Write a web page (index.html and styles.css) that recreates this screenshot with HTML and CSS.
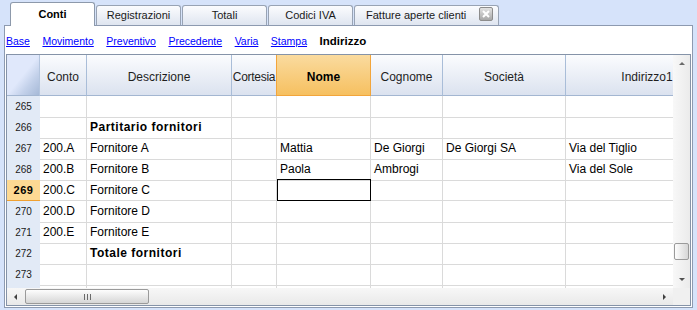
FILE: index.html
```html
<!DOCTYPE html>
<html lang="it">
  <head>
    <meta charset="UTF-8" />
    <title>Conti - Indirizzo</title>
    <link rel="stylesheet" href="styles.css">
  </head>
  <body>
    <!-- schede -->
    <div class="tabs">
      <div class="tab active">Conti</div>
      <div class="tab">Registrazioni</div>
      <div class="tab">Totali</div>
      <div class="tab">Codici IVA</div>
      <div class="tab tab-wide">
        Fatture aperte clienti
        <span class="tab-close">
          <svg width="8" height="8" viewBox="0 0 8 8"><path d="M1 1L7 7M7 1L1 7" stroke="#fff" stroke-width="2" /></svg>
        </span>
      </div>
    </div>

    <div class="panel">
      <!-- viste -->
      <div class="views">
        <a href="#">Base</a>
        <a href="#">Movimento</a>
        <a href="#">Preventivo</a>
        <a href="#">Precedente</a>
        <a href="#">Varia</a>
        <a href="#">Stampa</a>
        <b>Indirizzo</b>
      </div>

      <!-- tabella -->
      <div class="grid">
        <div class="grid-main">
          <div class="sheet">
            <div class="row head">
              <div class="hcorner"></div>
              <div class="hcell">Conto</div>
              <div class="hcell">Descrizione</div>
              <div class="hcell tight">Cortesia</div>
              <div class="hcell sel">Nome</div>
              <div class="hcell">Cognome</div>
              <div class="hcell">Società</div>
              <div class="hcell">Indirizzo1</div>
            </div>
            <div class="row">
              <div class="num">265</div>
              <div class="cell"></div><div class="cell"></div><div class="cell"></div><div class="cell"></div>
              <div class="cell"></div><div class="cell"></div><div class="cell"></div>
            </div>
            <div class="row">
              <div class="num">266</div>
              <div class="cell"></div><div class="cell bold">Partitario fornitori</div><div class="cell"></div><div class="cell"></div>
              <div class="cell"></div><div class="cell"></div><div class="cell"></div>
            </div>
            <div class="row">
              <div class="num">267</div>
              <div class="cell">200.A</div><div class="cell">Fornitore A</div><div class="cell"></div><div class="cell">Mattia</div>
              <div class="cell">De Giorgi</div><div class="cell">De Giorgi SA</div><div class="cell">Via del Tiglio</div>
            </div>
            <div class="row">
              <div class="num">268</div>
              <div class="cell">200.B</div><div class="cell">Fornitore B</div><div class="cell"></div><div class="cell">Paola</div>
              <div class="cell">Ambrogi</div><div class="cell"></div><div class="cell">Via del Sole</div>
            </div>
            <div class="row">
              <div class="num sel">269</div>
              <div class="cell">200.C</div><div class="cell">Fornitore C</div><div class="cell"></div><div class="cell current"></div>
              <div class="cell"></div><div class="cell"></div><div class="cell"></div>
            </div>
            <div class="row">
              <div class="num">270</div>
              <div class="cell">200.D</div><div class="cell">Fornitore D</div><div class="cell"></div><div class="cell"></div>
              <div class="cell"></div><div class="cell"></div><div class="cell"></div>
            </div>
            <div class="row">
              <div class="num">271</div>
              <div class="cell">200.E</div><div class="cell">Fornitore E</div><div class="cell"></div><div class="cell"></div>
              <div class="cell"></div><div class="cell"></div><div class="cell"></div>
            </div>
            <div class="row">
              <div class="num">272</div>
              <div class="cell"></div><div class="cell bold">Totale fornitori</div><div class="cell"></div><div class="cell"></div>
              <div class="cell"></div><div class="cell"></div><div class="cell"></div>
            </div>
            <div class="row">
              <div class="num">273</div>
              <div class="cell"></div><div class="cell"></div><div class="cell"></div><div class="cell"></div>
              <div class="cell"></div><div class="cell"></div><div class="cell"></div>
            </div>
            <div class="row">
              <div class="num"></div>
              <div class="cell"></div><div class="cell"></div><div class="cell"></div><div class="cell"></div>
              <div class="cell"></div><div class="cell"></div><div class="cell"></div>
            </div>
          </div>

          <!-- barra verticale -->
          <div class="vscroll">
            <div class="sb-btn"><span class="arrow-up"></span></div>
            <div class="vtrack"><div class="vthumb"></div></div>
            <div class="sb-btn"><span class="arrow-down"></span></div>
          </div>
        </div>

        <!-- barra orizzontale -->
        <div class="grid-foot">
          <div class="hscroll">
            <div class="sb-btn"><span class="arrow-left"></span></div>
            <div class="hthumb"><span class="grip"></span></div>
            <div class="sb-btn push"><span class="arrow-right"></span></div>
          </div>
          <div class="scroll-corner"></div>
        </div>
      </div>
    </div>
  </body>
</html>
```

FILE: styles.css
```css
* {
  margin: 0;
  padding: 0;
  box-sizing: border-box;
}

body {
  background: #d6e3fa;
  font-family: "Liberation Sans", Arial, sans-serif;
  color: #000;
  overflow: hidden;
}

/* schede */
.tabs {
  position: relative;
  z-index: 1;
  display: flex;
  align-items: flex-end;
  gap: 1px;
  height: 25px;
  padding-left: 10px;
}

.tab {
  width: 85px;
  height: 20px;
  border: 1px solid #98a3b4;
  border-bottom: none;
  border-radius: 3px 3px 0 0;
  background: linear-gradient(#fbfcfe, #dfe5f0);
  font-size: 11px;
  line-height: 19px;
  text-align: center;
  color: #1a1a1a;
}

.tab.active {
  height: 24px;
  margin-bottom: -1px;
  padding-top: 2px;
  background: #fff;
  border-color: #8d99ab;
  font-weight: bold;
  color: #000;
}

.tab-wide {
  width: 145px;
  display: flex;
  align-items: center;
  gap: 13px;
  padding-left: 11px;
  text-align: left;
}

.tab-close {
  width: 14px;
  height: 14px;
  margin-bottom: 4px;
  border: 1px solid #8c8c8c;
  border-radius: 2px;
  background: linear-gradient(#e2e2e2, #a8a8a8);
  display: flex;
  align-items: center;
  justify-content: center;
}

/* pannello */
.panel {
  margin: 0 4px;
  height: 283px;
  background: #fff;
  border: 1px solid #8d9ab0;
}

.views {
  height: 28px;
  padding: 2px 0 0 1px;
  display: flex;
  gap: 12.5px;
  font-size: 10.5px;
  line-height: 26px;
}

.views a {
  color: #0000ff;
}

.views b {
  font-size: 11.5px;
}

/* tabella */
.grid {
  margin: 0 1px;
  height: 252px;
  border: 1px solid #8593a8;
  display: flex;
  flex-direction: column;
}

.grid-main {
  display: flex;
  height: 233px;
}

.sheet {
  flex: 1;
  overflow: hidden;
}

.row {
  display: grid;
  grid-template-columns: 33px 47px 145px 45px 94px 72px 123px 163px;
  height: 21px;
}

.row.head {
  height: 41px;
}

.hcorner {
  background: linear-gradient(to bottom right, #e0e8fb 50%, #c3d1ea 72%, #a6b9d7 100%);
  border-right: 1px solid #b4c5de;
  border-bottom: 1px solid #a3b6d1;
}

.hcell {
  display: flex;
  align-items: center;
  justify-content: center;
  padding-top: 3px;
  border-right: 1px solid #a9bdd8;
  border-bottom: 1px solid #a3b6d1;
  background: linear-gradient(#fbfcfe, #dbe2ef);
  font-size: 12px;
  color: #1e1e1e;
  white-space: nowrap;
}

.hcell.tight {
  letter-spacing: -0.3px;
}

.hcell.sel {
  background: linear-gradient(#fadb9f, #f6c060);
  border-right-color: #f2a53b;
  border-bottom-color: #f2a53b;
  box-shadow: -1px 0 0 #f2a53b;
  font-weight: bold;
  color: #000;
}

.num {
  background: #e2eaf6;
  border-bottom: 1px solid #f3f6fb;
  padding-top: 1px;
  font-size: 10px;
  line-height: 20px;
  text-align: center;
  color: #1a1a1a;
}

.num.sel {
  background: #fdd993;
  border-bottom-color: #f0a030;
  padding-top: 0;
  font-size: 11px;
  font-weight: bold;
  letter-spacing: 0.6px;
  color: #000;
}

.cell {
  border-right: 1px solid #dadada;
  border-bottom: 1px solid #dadada;
  padding-left: 3px;
  font-size: 12px;
  line-height: 20px;
  white-space: nowrap;
  overflow: hidden;
}

.cell.bold {
  font-weight: bold;
  letter-spacing: 0.5px;
}

.cell.current {
  border-color: #000;
  box-shadow: 0 -1px 0 #000, inset 1px 0 0 #000;
}

/* barre di scorrimento */
.vscroll {
  width: 17px;
  display: flex;
  flex-direction: column;
  background: linear-gradient(90deg, #f8f8f8, #ebebeb);
}

.sb-btn {
  width: 17px;
  height: 17px;
  display: flex;
  align-items: center;
  justify-content: center;
  flex-shrink: 0;
}

.sb-btn.push {
  margin-left: auto;
}

.vtrack {
  flex: 1;
  padding-top: 171px;
}

.vthumb {
  width: 15px;
  height: 17px;
  margin: 0 auto;
  border: 1px solid #9a9a9a;
  border-radius: 2px;
  background: linear-gradient(90deg, #fdfdfd, #d6d6d6);
}

.arrow-up {
  border-left: 3px solid transparent;
  border-right: 3px solid transparent;
  border-bottom: 3px solid #6a6a6a;
}

.arrow-down {
  border-left: 3px solid transparent;
  border-right: 3px solid transparent;
  border-top: 3px solid #505050;
}

.arrow-left {
  border-top: 3px solid transparent;
  border-bottom: 3px solid transparent;
  border-right: 3px solid #404040;
}

.arrow-right {
  border-top: 3px solid transparent;
  border-bottom: 3px solid transparent;
  border-left: 3px solid #404040;
}

.grid-foot {
  display: flex;
  height: 17px;
}

.hscroll {
  flex: 1;
  display: flex;
  align-items: center;
  background: linear-gradient(#f7f7f7, #e9e9e9);
}

.hthumb {
  width: 124px;
  height: 15px;
  margin-left: 1px;
  border: 1px solid #9a9a9a;
  border-radius: 2px;
  background: linear-gradient(#fdfdfd, #d6d6d6);
  display: flex;
  align-items: center;
  justify-content: center;
}

.grip {
  width: 7px;
  height: 6px;
  background: repeating-linear-gradient(90deg, #6a6a6a 0 1px, transparent 1px 3px);
}

.scroll-corner {
  width: 17px;
  background: #f0f0f0;
}
```
